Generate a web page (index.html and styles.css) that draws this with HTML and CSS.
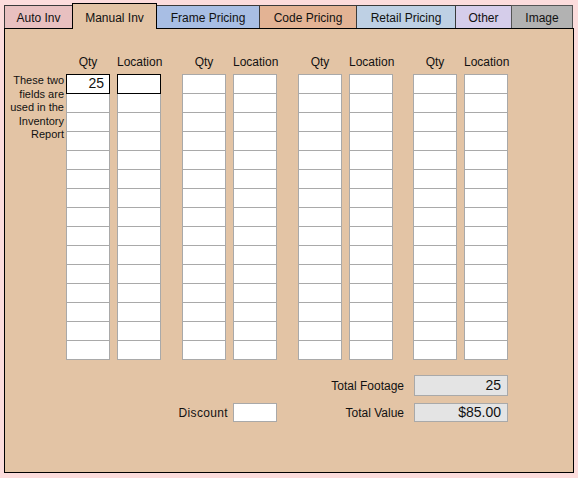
FILE: index.html
```html
<!DOCTYPE html>
<html>
<head>
<meta charset="utf-8">
<link rel="stylesheet" href="styles.css">
</head>
<body>
<div class="app">
  <div class="tabs">
    <div class="tab tab-auto">Auto Inv</div>
    <div class="tab tab-manual active">Manual Inv</div>
    <div class="tab tab-frame">Frame Pricing</div>
    <div class="tab tab-code">Code Pricing</div>
    <div class="tab tab-retail">Retail Pricing</div>
    <div class="tab tab-other">Other</div>
    <div class="tab tab-image">Image</div>
  </div>
  <div class="panel">
    <div class="grid">
      <div class="note">These two fields are used in the Inventory Report</div>
      <div class="group">
        <div class="col">
          <div class="head">Qty</div>
          <div class="cell first num">25</div><div class="cell"></div><div class="cell"></div><div class="cell"></div><div class="cell"></div><div class="cell"></div><div class="cell"></div><div class="cell"></div><div class="cell"></div><div class="cell"></div><div class="cell"></div><div class="cell"></div><div class="cell"></div><div class="cell"></div><div class="cell"></div>
        </div>
        <div class="col">
          <div class="head">Location</div>
          <div class="cell first"></div><div class="cell"></div><div class="cell"></div><div class="cell"></div><div class="cell"></div><div class="cell"></div><div class="cell"></div><div class="cell"></div><div class="cell"></div><div class="cell"></div><div class="cell"></div><div class="cell"></div><div class="cell"></div><div class="cell"></div><div class="cell"></div>
        </div>
      </div>
      <div class="group">
        <div class="col">
          <div class="head">Qty</div>
          <div class="cell"></div><div class="cell"></div><div class="cell"></div><div class="cell"></div><div class="cell"></div><div class="cell"></div><div class="cell"></div><div class="cell"></div><div class="cell"></div><div class="cell"></div><div class="cell"></div><div class="cell"></div><div class="cell"></div><div class="cell"></div><div class="cell"></div>
        </div>
        <div class="col">
          <div class="head">Location</div>
          <div class="cell"></div><div class="cell"></div><div class="cell"></div><div class="cell"></div><div class="cell"></div><div class="cell"></div><div class="cell"></div><div class="cell"></div><div class="cell"></div><div class="cell"></div><div class="cell"></div><div class="cell"></div><div class="cell"></div><div class="cell"></div><div class="cell"></div>
        </div>
      </div>
      <div class="group">
        <div class="col">
          <div class="head">Qty</div>
          <div class="cell"></div><div class="cell"></div><div class="cell"></div><div class="cell"></div><div class="cell"></div><div class="cell"></div><div class="cell"></div><div class="cell"></div><div class="cell"></div><div class="cell"></div><div class="cell"></div><div class="cell"></div><div class="cell"></div><div class="cell"></div><div class="cell"></div>
        </div>
        <div class="col">
          <div class="head">Location</div>
          <div class="cell"></div><div class="cell"></div><div class="cell"></div><div class="cell"></div><div class="cell"></div><div class="cell"></div><div class="cell"></div><div class="cell"></div><div class="cell"></div><div class="cell"></div><div class="cell"></div><div class="cell"></div><div class="cell"></div><div class="cell"></div><div class="cell"></div>
        </div>
      </div>
      <div class="group group-last">
        <div class="col">
          <div class="head">Qty</div>
          <div class="cell"></div><div class="cell"></div><div class="cell"></div><div class="cell"></div><div class="cell"></div><div class="cell"></div><div class="cell"></div><div class="cell"></div><div class="cell"></div><div class="cell"></div><div class="cell"></div><div class="cell"></div><div class="cell"></div><div class="cell"></div><div class="cell"></div>
        </div>
        <div class="col">
          <div class="head">Location</div>
          <div class="cell"></div><div class="cell"></div><div class="cell"></div><div class="cell"></div><div class="cell"></div><div class="cell"></div><div class="cell"></div><div class="cell"></div><div class="cell"></div><div class="cell"></div><div class="cell"></div><div class="cell"></div><div class="cell"></div><div class="cell"></div><div class="cell"></div>
        </div>
      </div>
    </div>
    <div class="totals">
      <div class="label label-total row1">Total Footage</div>
      <div class="field readonly tall row1">25</div>
      <div class="label label-discount row2">Discount</div>
      <div class="field entry row2"></div>
      <div class="label label-total row2">Total Value</div>
      <div class="field readonly row2">$85.00</div>
    </div>
  </div>
</div>
</body>
</html>
```

FILE: styles.css
```css
* { box-sizing: border-box; }

html, body {
  margin: 0;
  padding: 0;
  background: #fcdcdc;
  font-family: "Liberation Sans", Arial, sans-serif;
  color: #111;
}

.app {
  padding: 3px 0 0 4px;
}

.tabs {
  display: flex;
  align-items: flex-end;
  height: 25px;
}

.tab {
  height: 23px;
  border: 1px solid #3a3a3a;
  border-bottom: none;
  margin-left: -1px;
  padding-top: 5px;
  font-size: 12px;
  line-height: 14px;
  text-align: center;
  white-space: nowrap;
}

.tab:first-child { margin-left: 0; }

.tab.active {
  height: 26px;
  padding-top: 7px;
  margin-bottom: -1px;
  border-color: #000;
  position: relative;
  z-index: 2;
}

.tab-auto   { width: 69px;  background: #e8c0c0; }
.tab-manual { width: 85px;  background: #e3c4a5; }
.tab-frame  { width: 104px; background: #a8bee4; }
.tab-code   { width: 98px;  background: #e3b394; }
.tab-retail { width: 100px; background: #bed0e4; }
.tab-other  { width: 57px;  background: #d5cdea; }
.tab-image  { width: 62px;  background: #b2b2b2; border-color: #555; }

.panel {
  width: 570px;
  height: 445px;
  border: 1px solid #000;
  background: #e3c4a5;
  position: relative;
  z-index: 1;
}

.grid {
  display: flex;
  padding-top: 26px;
}

.note {
  width: 59px;
  margin-right: 2px;
  padding-top: 19px;
  font-size: 11px;
  line-height: 13.6px;
  text-align: right;
}

.group {
  display: flex;
  gap: 7px;
  margin-right: 21px;
}

.group-last { margin-left: -1px; }

.col {
  width: 44px;
  display: flex;
  flex-direction: column;
}

.head {
  height: 14px;
  margin-bottom: 5px;
  font-size: 12px;
  line-height: 14px;
  text-align: center;
  white-space: nowrap;
}

.cell {
  height: 20px;
  border: 1px solid #a9a9a9;
  background: #fff;
  margin-top: -1px;
}

.head + .cell { margin-top: 0; }

.cell.first {
  border-color: #000;
  position: relative;
  z-index: 1;
}

.num {
  font-size: 14px;
  line-height: 16px;
  text-align: right;
  padding-right: 5px;
  color: #111;
}

.totals {
  display: grid;
  grid-template-columns: 1fr 44px 137px 94px;
  grid-template-rows: 21px 19px;
  row-gap: 7px;
  padding-right: 65px;
  margin-top: 15px;
  align-items: center;
}

.row1 { grid-row: 1; }
.row2 { grid-row: 2; }

.label {
  font-size: 12px;
  line-height: 14px;
  text-align: right;
  white-space: nowrap;
}

.label-discount {
  grid-column: 1;
  padding-right: 5px;
  letter-spacing: 0.35px;
}

.label-total {
  grid-column: 3;
  padding-right: 10px;
}

.field {
  height: 19px;
  border: 1px solid #a9a9a9;
}

.field.tall { height: 21px; }

.entry {
  grid-column: 2;
  background: #fff;
}

.readonly {
  grid-column: 4;
  background: #e4e4e4;
  font-size: 14px;
  line-height: 17px;
  text-align: right;
  padding-right: 6px;
}

.field.tall.readonly { line-height: 19px; }
```
